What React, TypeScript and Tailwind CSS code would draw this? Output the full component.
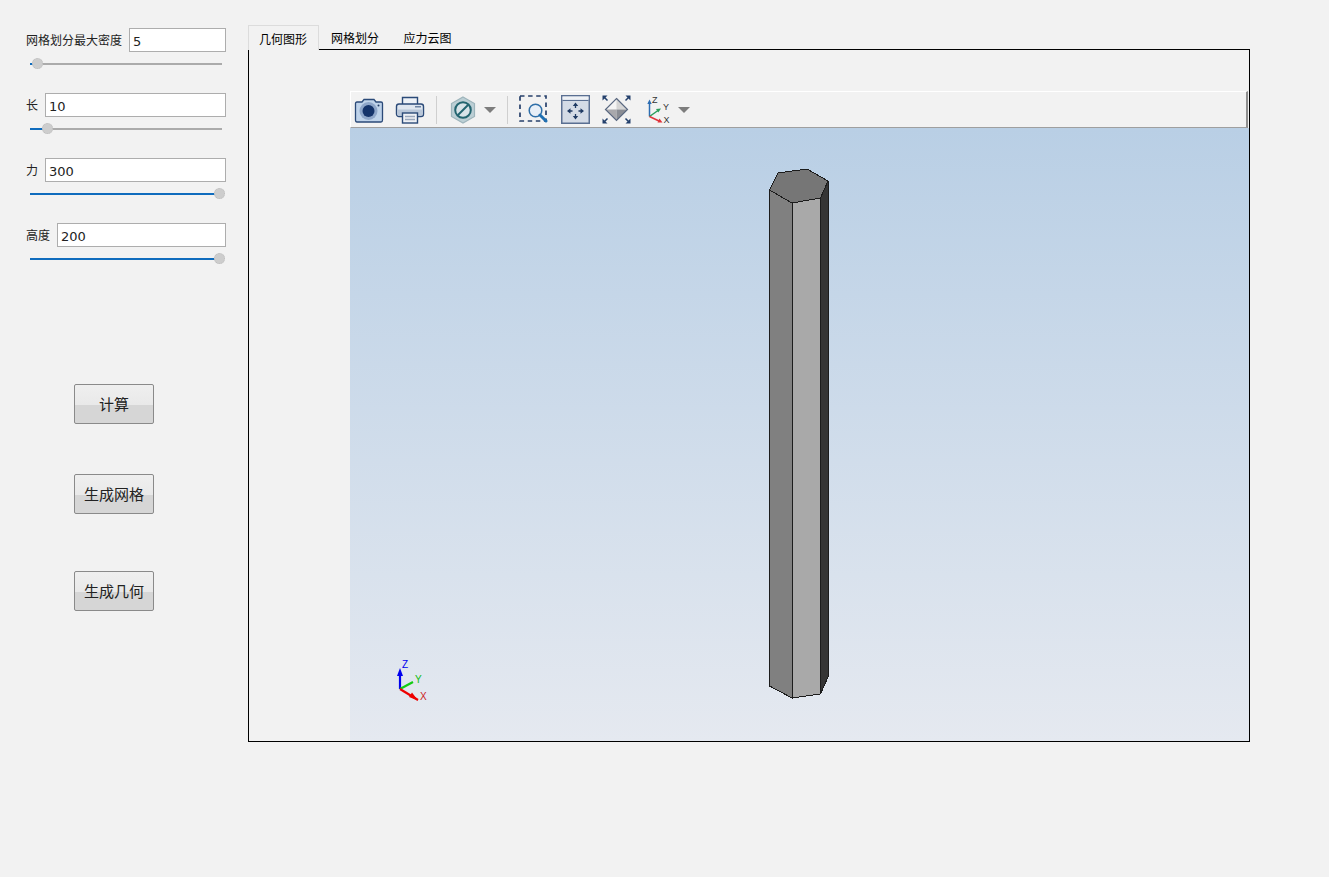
import React from "react";

const cjk = { fontFamily: '"Noto Sans CJK SC", sans-serif' };

function Param({ label, value, inputW, pct, blue }: { label: string; value: string; inputW: string; pct: number; blue: string }) {
  return (
    <div className="flex h-[65px] flex-col">
      <div className="flex h-[24px] w-[200px] items-center justify-between">
        <span className="text-[12px] leading-none text-[#222]">{label}</span>
        <input
          readOnly
          value={value}
          className={`${inputW} h-[24px] border border-[#adadad] bg-white pl-[3px] pt-[2px] text-[13px] text-[#222] outline-none`}
          style={{ fontFamily: '"DejaVu Sans", sans-serif' }}
        />
      </div>
      <div className="relative ml-[4px] mt-[11px] flex h-[2px] w-[192px]">
        <div className={`${blue} h-[2px] bg-[#0f6cbd]`} />
        <div className="h-[2px] flex-1 bg-[#ababab]" />
        <div
          className="absolute top-[-5px] h-[11px] w-[11px] rounded-full border border-dotted border-[#bdbdbd] bg-[#cdcdcd]"
          style={{ left: pct }}
        />
      </div>
    </div>
  );
}

function QtButton({ text, className }: { text: string; className: string }) {
  return (
    <button className={`${className} ml-[48px] h-[40px] w-[80px] rounded-[2px] border border-[#8a8a8a] bg-[linear-gradient(#efefef_0%,#e9e9e9_52%,#d6d6d6_52%,#d6d6d6_100%)] pb-[2px] text-[15px] leading-none text-[#222]`}>
      {text}
    </button>
  );
}

const Arrow = ({ className }: { className: string }) => (
  <svg width="12" height="6" viewBox="0 0 12 6" className={className}>
    <path d="M0 0H12L6 6Z" fill="#7d7d7d" />
  </svg>
);

const Sep = ({ className }: { className: string }) => <div className={`${className} h-[28px] w-px bg-[#cfcfcf]`} />;

function Toolbar() {
  return (
    <div className="flex h-[37px] w-[898px] items-center border-t border-r-2 border-b border-l border-t-white border-l-white border-r-[#8f8f8f] border-b-[#9f9f9f] bg-[#f2f2f2] pl-[3px]">
      {/* camera */}
      <svg width="30" height="28" viewBox="0 0 30 28">
        <path d="M1.5 7.5Q1.5 6 3 6H8L10 3.5H20L22 6H27Q28.5 6 28.5 7.5V24Q28.5 26 27 26H3Q1.5 26 1.5 24Z" fill="#bfd3ea" stroke="#2b4a78" strokeWidth="1.3" />
        <circle cx="14.5" cy="15" r="9" fill="#8ea6c9" />
        <circle cx="14.5" cy="15" r="6" fill="#14336a" />
        <circle cx="24.5" cy="9.5" r="1" fill="#1f3a63" />
      </svg>
      {/* printer */}
      <svg width="30" height="30" viewBox="0 0 30 30" className="ml-[11px]">
        <path d="M7.5 9V2.5H22.5V9" fill="#eef2f7" stroke="#2b4a78" strokeWidth="1.4" />
        <rect x="1.5" y="9" width="27" height="12.5" rx="2.5" fill="#dfe6ef" stroke="#2b4a78" strokeWidth="1.4" />
        <rect x="2.5" y="14.5" width="25" height="6" fill="#b9c7d9" />
        <rect x="20" y="11" width="6" height="1.5" fill="#6d83a3" />
        <rect x="7.5" y="18" width="15" height="10" fill="#eef1f5" stroke="#2b4a78" strokeWidth="1.4" />
        <path d="M10 21.5H20M10 24.5H20" stroke="#9aa8bc" strokeWidth="1.5" />
      </svg>
      <Sep className="ml-[11px]" />
      {/* hex */}
      <svg width="26" height="28" viewBox="0 0 26 28" className="ml-[13px]">
        <path d="M13 1L24.5 7.5V20.5L13 27L1.5 20.5V7.5Z" fill="#bccfd5" stroke="#9db4bb" strokeWidth="1.2" />
        <circle cx="13" cy="14" r="7.8" fill="#d7e3e8" stroke="#22646f" strokeWidth="2" />
        <path d="M8 19L18 9" stroke="#22646f" strokeWidth="2" />
      </svg>
      <Arrow className="ml-[8px]" />
      <Sep className="ml-[11px]" />
      {/* zoom box */}
      <svg width="29" height="29" viewBox="0 0 29 29" className="ml-[11px]">
        <rect x="1" y="1" width="26" height="25" fill="none" stroke="#27406b" strokeWidth="1.7" strokeDasharray="4.5 3.6" />
        <circle cx="16.5" cy="15.5" r="6.3" fill="#e8eff7" stroke="#2f6fa8" strokeWidth="1.5" />
        <path d="M21 20L27 26" stroke="#1f6fb2" strokeWidth="3" strokeLinecap="round" />
      </svg>
      {/* fit */}
      <svg width="29" height="29" viewBox="0 0 29 29" className="ml-[13px]">
        <rect x="0.75" y="0.75" width="27.5" height="27.5" fill="#d4dbe6" stroke="#5a6f92" strokeWidth="1.5" />
        <rect x="1.5" y="1.5" width="26" height="3" fill="#eef1f5" />
        <path d="M1.5 5.5H27.5" stroke="#5a6f92" />
        <path d="M14.5 10V13M14.5 19V22M8.5 16H11.5M17.5 16H20.5" stroke="#1f3a63" strokeWidth="1.3" />
        <path d="M14.5 7.5L11.8 11H17.2ZM14.5 24.5L11.8 21H17.2ZM6 16L9.5 13.3V18.7ZM23 16L19.5 13.3V18.7Z" fill="#1f3a63" />
      </svg>
      {/* diamond */}
      <svg width="30" height="29" viewBox="0 0 30 29" className="ml-[12px]">
        <path d="M14.5 3.5L14.5 14.5H3.5Z" fill="#f4f4f4" />
        <path d="M14.5 3.5L14.5 14.5H25.5Z" fill="#d5d5d5" />
        <path d="M14.5 25.5L14.5 14.5H3.5Z" fill="#a8a8ac" />
        <path d="M14.5 25.5L14.5 14.5H25.5Z" fill="#8a8d94" />
        <path d="M14.5 3.5L25.5 14.5L14.5 25.5L3.5 14.5Z" fill="none" stroke="#5a6880" strokeWidth="1.2" />
        <path d="M0.5 0.5H5.5L0.5 5.5ZM28.5 0.5H23.5L28.5 5.5ZM0.5 28.5H5.5L0.5 23.5ZM28.5 28.5H23.5L28.5 23.5Z" fill="#24406c" />
        <path d="M2 2L5.5 5.5M27 2L23.5 5.5M2 27L5.5 23.5M27 27L23.5 23.5" stroke="#24406c" strokeWidth="1.5" />
      </svg>
      {/* axes */}
      <svg width="24" height="29" viewBox="0 0 24 29" className="ml-[15px]" style={{ fontFamily: '"Liberation Sans", sans-serif' }}>
        <path d="M2.5 21.5V7" stroke="#2c6db3" strokeWidth="1.5" />
        <path d="M2.5 4.5L0.3 9H4.7Z" fill="#2c6db3" />
        <path d="M2.5 21.5L11 15.5" stroke="#2a9d5a" strokeWidth="1.5" />
        <path d="M14 13.5L9 14L11.3 17.5Z" fill="#2a9d5a" />
        <path d="M2.5 21.5L12 26" stroke="#e0333a" strokeWidth="1.5" />
        <path d="M15.5 27.5L10.5 27.5L12.5 23.5Z" fill="#e0333a" />
        <text x="5" y="8" fontSize="9" fill="#333">Z</text>
        <text x="16" y="15" fontSize="9" fill="#333">Y</text>
        <text x="16.5" y="28" fontSize="9" fill="#333">X</text>
      </svg>
      <Arrow className="ml-[7px]" />
    </div>
  );
}

function Scene() {
  return (
    <svg className="absolute inset-0 h-full w-full" viewBox="350 128 899 613" style={{ fontFamily: '"Liberation Sans", sans-serif' }}>
      <g stroke="#1c1c1c" strokeWidth="1" shapeRendering="crispEdges">
        <path d="M769.5 190L792 203V698L769.5 686Z" fill="#808080" />
        <path d="M792 203L820.5 198V694L792 698Z" fill="#a9a9a9" />
        <path d="M820.5 198L828 181V677L820.5 694Z" fill="#353535" />
        <path d="M778 173L807 169L828 181L820.5 198L792 203L769.5 190Z" fill="#767676" />
      </g>
      <path d="M400 689V673" stroke="#0000ee" strokeWidth="2.2" />
      <path d="M400 668L397 676H403Z" fill="#0000ee" />
      <path d="M400 689L413 682" stroke="#12cc12" strokeWidth="2.2" />
      <path d="M400 689L418 700" stroke="#ee0000" strokeWidth="2.2" />
      <path d="M418 700.5L409 697L412 692.5Z" fill="#ee0000" />
      <text x="402" y="668" fontSize="10" fill="#0000ee">Z</text>
      <text x="415" y="683" fontSize="10" fill="#12bb12">Y</text>
      <text x="420" y="700" fontSize="10" fill="#cc2222">X</text>
    </svg>
  );
}

export default function App() {
  return (
    <div className="flex h-[877px] w-[1329px] overflow-hidden bg-[#f2f2f2]" style={cjk}>
      <aside className="flex w-[248px] shrink-0 flex-col pl-[26px] pt-[28px]">
        <Param label="网格划分最大密度" value="5" inputW="w-[97px]" pct={2} blue="w-[3px]" />
        <Param label="长" value="10" inputW="w-[181px]" pct={12} blue="w-[14px]" />
        <Param label="力" value="300" inputW="w-[181px]" pct={184} blue="w-[186px]" />
        <Param label="高度" value="200" inputW="w-[169px]" pct={184} blue="w-[186px]" />
        <QtButton text="计算" className="mt-[96px]" />
        <QtButton text="生成网格" className="mt-[50px]" />
        <QtButton text="生成几何" className="mt-[57px]" />
      </aside>
      <main className="flex w-[1002px] flex-col pt-[25px]">
        <div className="relative z-10 -mb-px flex h-[25px] text-[12px] leading-none text-black">
          <div className="flex h-[25px] w-[71px] items-center justify-center border border-b-0 border-[#dcdcdc] bg-[#f2f2f2] pt-[2px] pr-[1px]">几何图形</div>
          <div className="flex h-[24px] w-[72px] items-center justify-center pt-[2px]">网格划分</div>
          <div className="flex h-[24px] w-[73px] items-center justify-center pt-[2px]">应力云图</div>
        </div>
        <div className="flex h-[693px] flex-col border border-black bg-[#f2f2f2] pl-[101px] pt-[41px]">
          <Toolbar />
          <div className="relative flex-1 bg-[linear-gradient(#b9cfe5,#e5e9f0)]">
            <Scene />
          </div>
        </div>
      </main>
    </div>
  );
}
